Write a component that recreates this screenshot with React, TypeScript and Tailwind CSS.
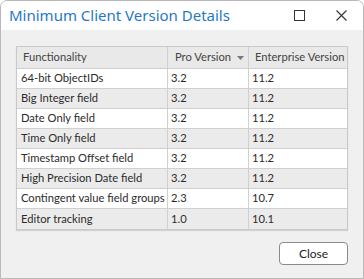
import React from "react";

interface Row {
  name: string;
  pro: string;
  enterprise: string;
}

const rows: Row[] = [
  { name: "64-bit ObjectIDs", pro: "3.2", enterprise: "11.2" },
  { name: "Big Integer field", pro: "3.2", enterprise: "11.2" },
  { name: "Date Only field", pro: "3.2", enterprise: "11.2" },
  { name: "Time Only field", pro: "3.2", enterprise: "11.2" },
  { name: "Timestamp Offset field", pro: "3.2", enterprise: "11.2" },
  { name: "High Precision Date field", pro: "3.2", enterprise: "11.2" },
  { name: "Contingent value field groups", pro: "2.3", enterprise: "10.7" },
  { name: "Editor tracking", pro: "1.0", enterprise: "10.1" },
];

export default function App() {
  return (
    <div
      className="w-[364px] h-[279px] flex flex-col border border-[#b9b9b9] rounded-t-[7px] overflow-hidden bg-[#f0f0f0] text-[#2b2b2b]"
      style={{ fontFamily: 'Lato, "Noto Sans", sans-serif' }}
    >
      {/* title bar */}
      <div className="h-[29px] shrink-0 bg-white flex items-center pl-2 pr-4">
        <span
          className="text-[15px] text-[#1f78c8] leading-none flex-1"
          style={{ fontFamily: '"Noto Sans", sans-serif' }}
        >
          Minimum Client Version Details
        </span>
        <svg width="11" height="11" viewBox="0 0 11 11" className="mr-[31px]">
          <rect x="0.5" y="0.5" width="10" height="10" fill="none" stroke="#333" strokeWidth="1" />
        </svg>
        <svg width="11" height="11" viewBox="0 0 11 11">
          <path d="M0.5 0.5 L10.5 10.5 M10.5 0.5 L0.5 10.5" stroke="#333" strokeWidth="1.1" />
        </svg>
      </div>

      <div className="flex-1 flex flex-col px-[15px] pt-4">
        <div className="border border-[#c9c9c9] shadow-[0_1px_1px_rgba(0,0,0,0.12)] text-[11.2px]">
          <div className="grid grid-cols-[151px_81px_1fr] h-[22px] bg-[#e9e9e9] border-b border-[#d0d0d0] text-[#444] whitespace-nowrap">
            <div className="flex items-center pl-[6px] border-r border-[#d0d0d0]">Functionality</div>
            <div className="flex items-center pl-[7px] pr-[4px] border-r border-[#d0d0d0]">
              <span className="flex-1">Pro Version</span>
              <svg width="7" height="4" viewBox="0 0 7 4">
                <path d="M0 0 L7 0 L3.5 4 Z" fill="#777" />
              </svg>
            </div>
            <div className="flex items-center pl-[6px]">Enterprise Version</div>
          </div>
          {rows.map((r, i) => (
            <div
              key={r.name}
              className={
                "grid grid-cols-[151px_81px_1fr] h-[20px] " +
                (i < rows.length - 1 ? "border-b border-[#d0d0d0] " : "") +
                (i % 2 === 0 ? "bg-white" : "bg-[#ebebeb]")
              }
            >
              <div className="flex items-center pl-[4px] border-r border-[#d0d0d0] whitespace-nowrap overflow-hidden">{r.name}</div>
              <div className="flex items-center pl-[3px] border-r border-[#d0d0d0]">{r.pro}</div>
              <div className="flex items-center pl-[3px]">{r.enterprise}</div>
            </div>
          ))}
        </div>

        <div className="flex justify-end mt-3">
          <button className="w-[69px] h-[23px] bg-white border border-[#8a8a8a] rounded-[4px] text-[12px] text-[#222] flex items-center justify-center">
            Close
          </button>
        </div>
      </div>
    </div>
  );
}
